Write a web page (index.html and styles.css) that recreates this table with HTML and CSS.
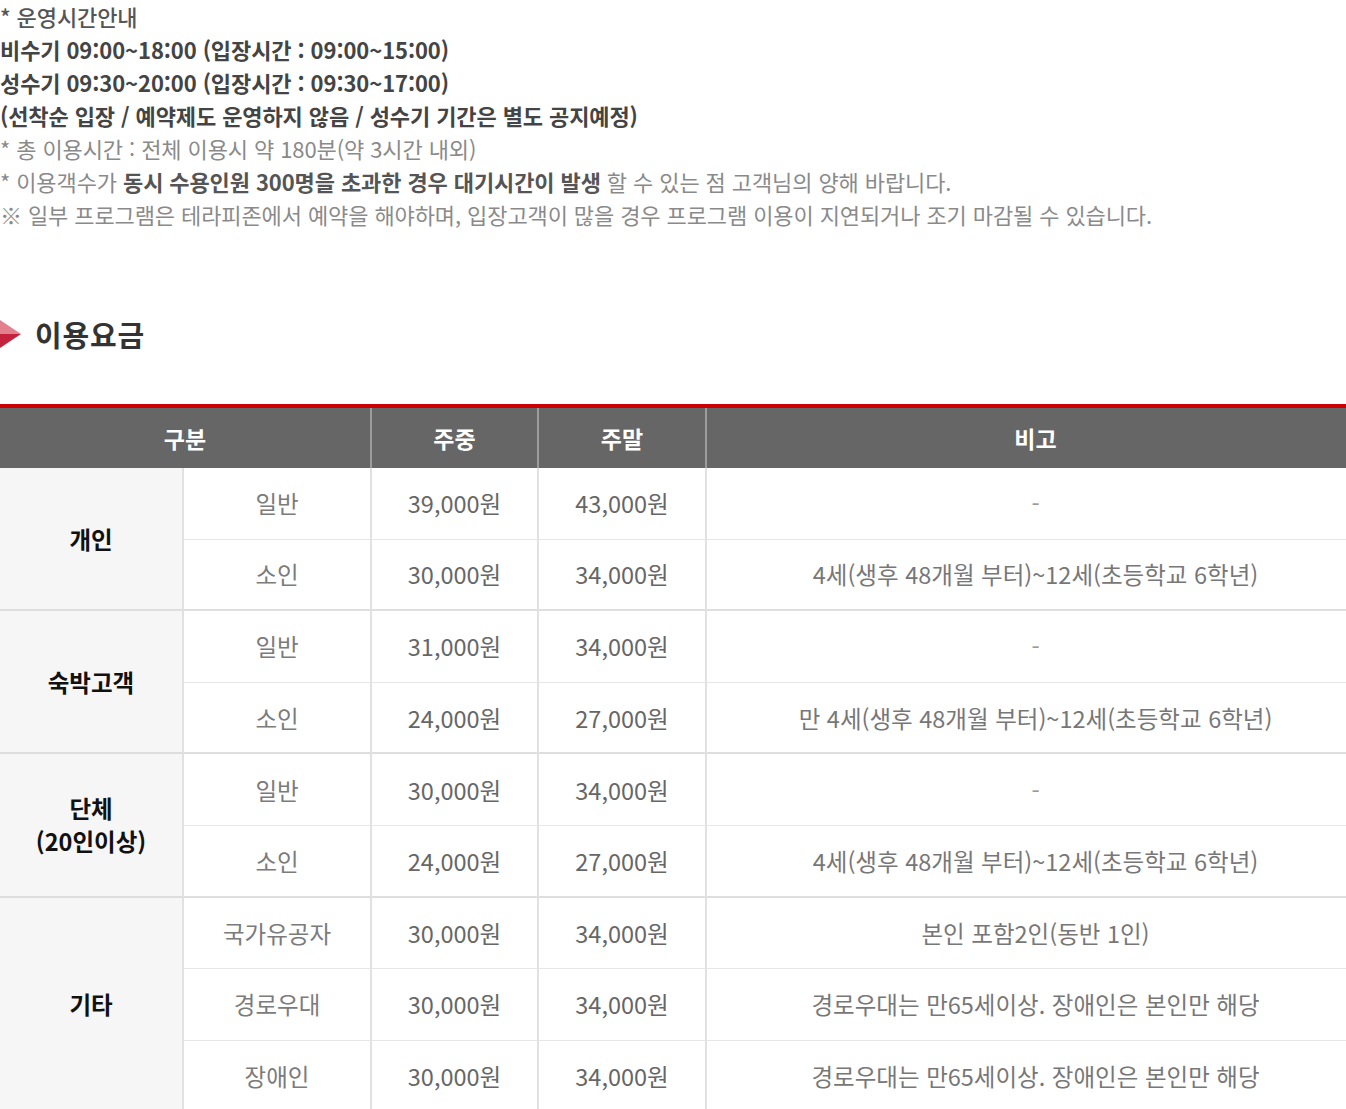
FILE: index.html
```html
<!DOCTYPE html>
<html lang="ko">
<head>
<meta charset="utf-8">
<title>이용요금</title>
<link rel="stylesheet" href="styles.css">
</head>
<body>
<div class="page">
  <div class="notice">
    <p class="n-title">* 운영시간안내</p>
    <p class="n-strong">비수기 09:00~18:00 (입장시간 : 09:00~15:00)</p>
    <p class="n-strong">성수기 09:30~20:00 (입장시간 : 09:30~17:00)</p>
    <p class="n-strong">(선착순 입장 / 예약제도 운영하지 않음 / 성수기 기간은 별도 공지예정)</p>
    <p class="n-light">* 총 이용시간 : 전체 이용시 약 180분(약 3시간 내외)</p>
    <p class="n-light">* 이용객수가 <b>동시 수용인원 300명을 초과한 경우 대기시간이 발생</b> 할 수 있는 점 고객님의 양해 바랍니다.</p>
    <p class="n-light">※ 일부 프로그램은 테라피존에서 예약을 해야하며, 입장고객이 많을 경우 프로그램 이용이 지연되거나 조기 마감될 수 있습니다.</p>
  </div>

  <h2 class="sec-title">
    <svg class="sec-icon" width="22" height="30" viewBox="0 0 22 30" aria-hidden="true">
      <polygon points="0,1 21,15 0,15" fill="#e2808d"/>
      <polygon points="0,15 21,15 0,29" fill="#c3233d"/>
    </svg>
    <span>이용요금</span>
  </h2>

  <table class="fee">
    <colgroup>
      <col class="c1"><col class="c2"><col class="c3"><col class="c4"><col class="c5">
    </colgroup>
    <thead>
      <tr>
        <th colspan="2">구분</th>
        <th>주중</th>
        <th>주말</th>
        <th class="last">비고</th>
      </tr>
    </thead>
    <tbody>
      <tr>
        <td rowspan="2" class="cat grp">개인</td>
        <td class="kind">일반</td><td class="price">39,000원</td><td class="price">43,000원</td><td class="note dash">-</td>
      </tr>
      <tr class="grp">
        <td class="kind">소인</td><td class="price">30,000원</td><td class="price">34,000원</td><td class="note">4세(생후 48개월 부터)~12세(초등학교 6학년)</td>
      </tr>
      <tr>
        <td rowspan="2" class="cat grp">숙박고객</td>
        <td class="kind">일반</td><td class="price">31,000원</td><td class="price">34,000원</td><td class="note dash">-</td>
      </tr>
      <tr class="grp">
        <td class="kind">소인</td><td class="price">24,000원</td><td class="price">27,000원</td><td class="note">만 4세(생후 48개월 부터)~12세(초등학교 6학년)</td>
      </tr>
      <tr>
        <td rowspan="2" class="cat grp two"><span class="ln">단체</span><span class="ln">(20인이상)</span></td>
        <td class="kind">일반</td><td class="price">30,000원</td><td class="price">34,000원</td><td class="note dash">-</td>
      </tr>
      <tr class="grp">
        <td class="kind">소인</td><td class="price">24,000원</td><td class="price">27,000원</td><td class="note">4세(생후 48개월 부터)~12세(초등학교 6학년)</td>
      </tr>
      <tr>
        <td rowspan="3" class="cat grp">기타</td>
        <td class="kind">국가유공자</td><td class="price">30,000원</td><td class="price">34,000원</td><td class="note">본인 포함2인(동반 1인)</td>
      </tr>
      <tr>
        <td class="kind">경로우대</td><td class="price">30,000원</td><td class="price">34,000원</td><td class="note">경로우대는 만65세이상. 장애인은 본인만 해당</td>
      </tr>
      <tr class="grp">
        <td class="kind">장애인</td><td class="price">30,000원</td><td class="price">34,000원</td><td class="note">경로우대는 만65세이상. 장애인은 본인만 해당</td>
      </tr>
    </tbody>
  </table>
</div>
</body>
</html>
```

FILE: styles.css
```css
html, body {
  margin: 0;
  padding: 0;
  background: #fff;
}
body {
  font-family: "Noto Sans CJK KR", "Noto Sans", sans-serif;
  overflow-x: hidden;
}
.page {
  width: 100%;
  overflow: hidden;
}
.notice p {
  margin: 0;
  font-size: 22px;
  line-height: 33px;
  letter-spacing: -0.1px;
  white-space: nowrap;
}
.n-title {
  color: #555;
  font-weight: 500;
}
.n-strong {
  color: #444;
  font-weight: 700;
}
.n-light {
  color: #8a8a8a;
  font-weight: 400;
}
.n-light b {
  color: #555;
  font-weight: 700;
}
.sec-title {
  display: flex;
  align-items: center;
  gap: 13px;
  margin: 83px 0 0 0;
  height: 40px;
  font-size: 29px;
  font-weight: 700;
  color: #333;
  letter-spacing: 0.8px;
}
.sec-icon {
  display: block;
  flex: none;
}
.fee {
  margin-top: 50px;
  width: 1364px;
  border-collapse: separate;
  border-spacing: 0;
  table-layout: fixed;
  border-top: 4px solid #cc0000;
}
.c1 { width: 184px; }
.c2 { width: 188px; }
.c3 { width: 167px; }
.c4 { width: 168px; }
.c5 { width: 657px; }
.fee th {
  height: 60px;
  padding: 0;
  background: #666;
  color: #fff;
  font-size: 23px;
  font-weight: 700;
  text-align: center;
  border-right: 2px solid #9c9c9c;
}
.fee th.last {
  border-right: none;
}
.fee tbody tr {
  height: 71.6px;
}
.fee td {
  padding: 0;
  text-align: center;
  vertical-align: middle;
  font-size: 23.5px;
  line-height: 30px;
  border-right: 2px solid #e1e1e1;
  border-bottom: 1px solid #e6e6e6;
}
.fee tr.grp td,
.fee td.grp {
  border-bottom: 2px solid #dedede;
}
.fee td.cat {
  background: #f6f6f6;
  color: #111;
  font-weight: 700;
}
.fee td.two .ln {
  display: block;
  line-height: 31px;
}
.fee td.two .ln + .ln {
  margin-top: 2px;
}
.fee td.kind {
  color: #7b7b7b;
}
.fee td.price {
  color: #666;
}
.fee td.note {
  color: #777;
  border-right: none;
}
.fee td.dash {
  color: #999;
}
```
